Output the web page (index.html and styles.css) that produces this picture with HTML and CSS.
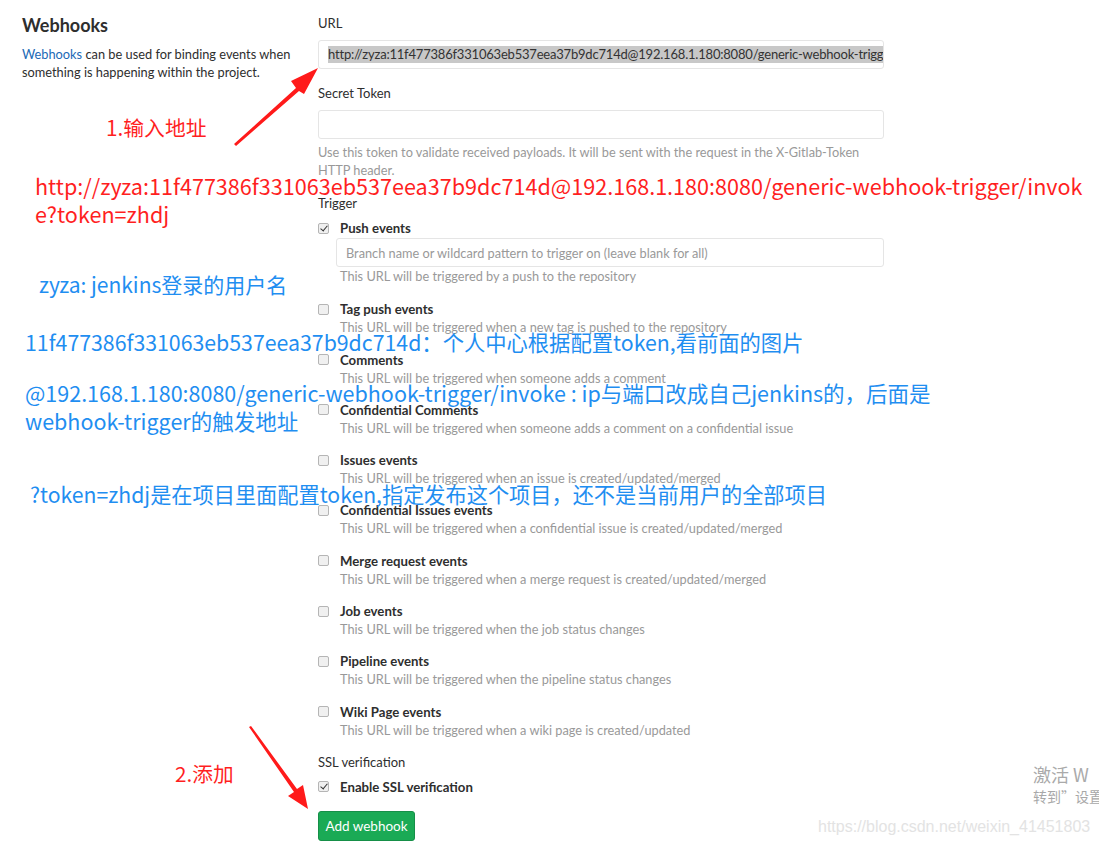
FILE: index.html
```html
<!DOCTYPE html>
<html lang="zh">
<head>
<meta charset="utf-8">
<title>Webhooks</title>
<link rel="stylesheet" href="styles.css">
</head>
<body>
<div class="page">
  <div class="layout">
    <aside class="intro">
      <h4 class="intro-title">Webhooks</h4>
      <p class="intro-text"><a class="link" href="#">Webhooks</a> can be used for binding events when something is happening within the project.</p>
    </aside>
    <main class="form">
      <div class="field">
        <label class="field-label">URL</label>
        <div class="input input-url"><span class="selected">http://zyza:11f477386f331063eb537eea37b9dc714d@192.168.1.180:8080/generic-webhook-trigger/invoke?token=zhdj</span></div>
      </div>
      <div class="field">
        <label class="field-label">Secret Token</label>
        <div class="input"></div>
        <p class="help">Use this token to validate received payloads. It will be sent with the request in the X-Gitlab-Token HTTP header.</p>
      </div>
      <div class="field field-triggers">
        <label class="field-label field-label-tight">Trigger</label>
        <div class="event event-push">
          <div class="event-head"><span class="check checked"></span><span class="event-name">Push events</span></div>
          <div class="event-body">
            <div class="input input-branch"><span class="placeholder">Branch name or wildcard pattern to trigger on (leave blank for all)</span></div>
            <p class="help">This URL will be triggered by a push to the repository</p>
          </div>
        </div>
        <div class="event">
          <div class="event-head"><span class="check"></span><span class="event-name">Tag push events</span></div>
          <div class="event-body"><p class="help">This URL will be triggered when a new tag is pushed to the repository</p></div>
        </div>
        <div class="event">
          <div class="event-head"><span class="check"></span><span class="event-name">Comments</span></div>
          <div class="event-body"><p class="help">This URL will be triggered when someone adds a comment</p></div>
        </div>
        <div class="event">
          <div class="event-head"><span class="check"></span><span class="event-name">Confidential Comments</span></div>
          <div class="event-body"><p class="help">This URL will be triggered when someone adds a comment on a confidential issue</p></div>
        </div>
        <div class="event">
          <div class="event-head"><span class="check"></span><span class="event-name">Issues events</span></div>
          <div class="event-body"><p class="help">This URL will be triggered when an issue is created/updated/merged</p></div>
        </div>
        <div class="event">
          <div class="event-head"><span class="check"></span><span class="event-name">Confidential Issues events</span></div>
          <div class="event-body"><p class="help">This URL will be triggered when a confidential issue is created/updated/merged</p></div>
        </div>
        <div class="event">
          <div class="event-head"><span class="check"></span><span class="event-name">Merge request events</span></div>
          <div class="event-body"><p class="help">This URL will be triggered when a merge request is created/updated/merged</p></div>
        </div>
        <div class="event">
          <div class="event-head"><span class="check"></span><span class="event-name">Job events</span></div>
          <div class="event-body"><p class="help">This URL will be triggered when the job status changes</p></div>
        </div>
        <div class="event">
          <div class="event-head"><span class="check"></span><span class="event-name">Pipeline events</span></div>
          <div class="event-body"><p class="help">This URL will be triggered when the pipeline status changes</p></div>
        </div>
        <div class="event event-last">
          <div class="event-head"><span class="check"></span><span class="event-name">Wiki Page events</span></div>
          <div class="event-body"><p class="help">This URL will be triggered when a wiki page is created/updated</p></div>
        </div>
      </div>
      <div class="field field-ssl">
        <label class="field-label field-label-tight">SSL verification</label>
        <div class="event-head"><span class="check checked"></span><span class="event-name">Enable SSL verification</span></div>
      </div>
      <button class="btn-create" type="button">Add webhook</button>
    </main>
  </div>

  <svg class="arrows" width="1099" height="846" viewBox="0 0 1099 846" xmlns="http://www.w3.org/2000/svg">
    <polygon fill="#ff1a1a" points="234,144 296,88 291,81 318,68 304,94 299,91 236,146"/>
    <polygon fill="#ff1a1a" points="249,727 251,726 297,789 303,785 308,809 288,796 294,792"/>
  </svg>

  <div class="note red note-step1">1.输入地址</div>
  <div class="note red note-url">http://zyza:11f477386f331063eb537eea37b9dc714d@192.168.1.180:8080/generic-webhook-trigger/invok<br>e?token=zhdj</div>
  <div class="note blue note-user">zyza: jenkins登录的用户名</div>
  <div class="note blue note-token">11f477386f331063eb537eea37b9dc714d：个人中心根据配置token,看前面的图片</div>
  <div class="note blue note-host">@192.168.1.180:8080/generic-webhook-trigger/invoke : ip与端口改成自己jenkins的，后面是<br>webhook-trigger的触发地址</div>
  <div class="note blue note-query">?token=zhdj是在项目里面配置token,指定发布这个项目，还不是当前用户的全部项目</div>
  <div class="note red note-step2">2.添加</div>

  <div class="activate">
    <div class="activate-title">激活 W</div>
    <div class="activate-sub">转到”设置</div>
  </div>
  <div class="watermark">https://blog.csdn.net/weixin_41451803</div>
</div>
</body>
</html>
```

FILE: styles.css
```css
* { box-sizing: border-box; }

html, body {
  margin: 0;
  padding: 0;
  background: #fff;
}

body {
  font-family: "Lato", "Noto Sans", "Noto Sans CJK SC", sans-serif;
  color: #2e2e2e;
  font-size: 13px;
}

.page {
  position: relative;
  width: 1099px;
  height: 846px;
  overflow: hidden;
}

.layout {
  display: flex;
  padding: 14px 0 0 22px;
}

.intro {
  width: 296px;
  flex: none;
}

.intro-title {
  margin: 0 0 9px;
  font-size: 18px;
  line-height: 22px;
  font-weight: 700;
  color: #2e2e2e;
}

.intro-text {
  margin: 0;
  width: 275px;
  font-size: 12.8px;
  line-height: 18px;
  color: #2e2e2e;
}

.link {
  color: #1b69b6;
  text-decoration: none;
}

.form {
  width: 566px;
  flex: none;
}

.field { margin-bottom: 15px; }
.field-triggers { margin-bottom: 14px; }
.field-ssl { margin-bottom: 15px; }

.field-label {
  display: block;
  font-size: 13px;
  line-height: 18px;
  margin-bottom: 8px;
  color: #2e2e2e;
}

.field-label-tight { margin-bottom: 7px; }

.input {
  height: 29px;
  border: 1px solid #e5e5e5;
  border-radius: 3px;
  background: #fff;
  padding: 0 9px;
  display: flex;
  align-items: center;
  overflow: hidden;
  white-space: nowrap;
}

.input-url { font-size: 13px; color: #333; }

.selected {
  background: #c8c8c8;
  line-height: 17px;
  letter-spacing: -0.2px;
}

.help {
  margin: 4px 0 0;
  font-size: 12.75px;
  line-height: 18px;
  height: 18px;
  color: #999;
}

.field > .help { height: auto; }

.event { margin-bottom: 14.3px; }
.event-push { margin-bottom: 15.3px; }
.event-last { margin-bottom: 0; }

.event-head {
  display: flex;
  align-items: center;
  height: 18px;
}

.check {
  width: 11px;
  height: 11px;
  border: 1px solid #b5b5b5;
  border-radius: 2px;
  background: #f0f0f0;
  margin-right: 11px;
  flex: none;
  position: relative;
}

.checked::after {
  content: "";
  position: absolute;
  left: 3px;
  top: 0px;
  width: 3px;
  height: 6px;
  border: solid #333;
  border-width: 0 1.5px 1.5px 0;
  transform: rotate(40deg);
}

.event-name {
  font-size: 13.2px;
  font-weight: 700;
  color: #2e2e2e;
}

.event-body { padding-left: 18px; }

.event-body .help { margin-top: 0; padding-left: 4px; }

.input-branch {
  margin-top: 1px;
  margin-bottom: 0;
  font-size: 12.75px;
}

.placeholder { color: #999; }

.btn-create {
  display: block;
  height: 30px;
  width: 97px;
  padding: 0;
  margin-top: 0;
  border: 1px solid #168f48;
  border-radius: 3px;
  background: #1aaa55;
  color: #fff;
  font-family: "Lato", "Noto Sans", sans-serif;
  font-size: 13.5px;
}

.arrows {
  position: absolute;
  left: 0;
  top: 0;
  pointer-events: none;
}

.note {
  position: absolute;
  font-family: "Noto Sans CJK SC", "Noto Sans", sans-serif;
  white-space: nowrap;
}

.red { color: #ff1f1f; }
.blue { color: #1f8ef1; }

.note-step1 { left: 106px; top: 113px; font-size: 20.8px; line-height: 28px; }
.note-url { left: 35px; top: 172px; font-size: 21.6px; line-height: 28px; }
.note-user { left: 39px; top: 270px; font-size: 21px; line-height: 28px; }
.note-token { left: 25px; top: 328px; font-size: 21.3px; line-height: 28px; }
.note-host { left: 25px; top: 379px; font-size: 21.5px; line-height: 28px; }
.note-query { left: 30px; top: 480px; font-size: 21.2px; line-height: 28px; }
.note-step2 { left: 175px; top: 759px; font-size: 20.7px; line-height: 28px; }

.activate {
  position: absolute;
  left: 1033px;
  top: 762px;
  font-family: "Noto Sans CJK SC", sans-serif;
}

.activate-title { font-size: 18px; line-height: 24px; color: #aaa; white-space: nowrap; }
.activate-sub { font-size: 14px; line-height: 20px; color: #a8a8a8; white-space: nowrap; }

.watermark {
  position: absolute;
  left: 818px;
  top: 817px;
  font-family: "Liberation Sans", Arial, sans-serif;
  font-size: 16px;
  line-height: 20px;
  color: #e3e3e3;
  white-space: nowrap;
}
```
